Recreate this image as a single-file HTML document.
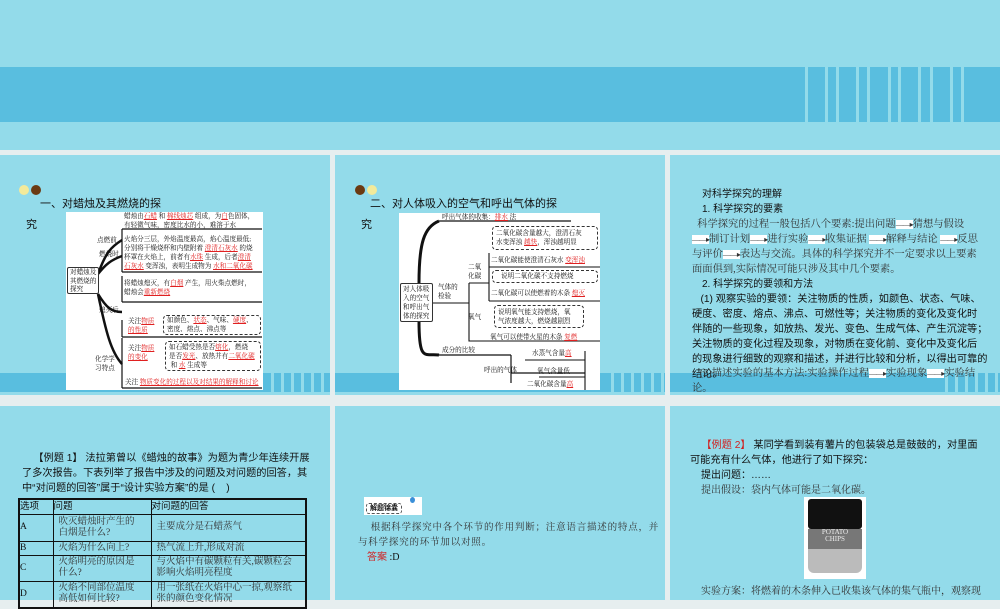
<!DOCTYPE html>
<html><head><meta charset="utf-8"><style>
*{margin:0;padding:0;box-sizing:border-box}
body{width:1000px;height:600px;overflow:hidden;background:#e6eeef;position:relative;font-family:"Liberation Serif","Noto Serif CJK SC",serif;color:#111}
.s{position:absolute;background:#93dbea;overflow:hidden}
.band{position:absolute;left:0;right:0;background:#59bedf}
.strp{position:absolute;top:0;bottom:0;width:3px;background:#93dbea}
.a{position:absolute;white-space:nowrap}
.t{position:absolute;white-space:nowrap;font-size:6.6px;line-height:9px;font-family:"Liberation Serif","Noto Serif CJK SC",serif}
.r{color:#e02020;text-decoration:underline}
.db{position:absolute;border:1px dashed #333;border-radius:4px}
.box{position:absolute;border:1px solid #333;border-radius:2px;background:#fff}
.wb{position:absolute;background:#fff}
.sans{font-family:"Liberation Sans","Noto Sans CJK SC",sans-serif}
.p{font-size:10px;line-height:15px}
.ar{background:#fff;font-size:8px;letter-spacing:-1px}
</style></head><body>

<div class="s" style="left:0;top:0;width:1000px;height:150px">
 <div class="band" style="top:67px;height:55px"></div>
 <div style="position:absolute;left:805px;top:67px;height:55px;width:195px">
  <div class="strp" style="left:0"></div><div class="strp" style="left:20px"></div><div class="strp" style="left:31px"></div><div class="strp" style="left:51px"></div><div class="strp" style="left:62px"></div><div class="strp" style="left:83px"></div><div class="strp" style="left:93px"></div><div class="strp" style="left:113px"></div><div class="strp" style="left:125px"></div><div class="strp" style="left:145px"></div><div class="strp" style="left:156px"></div>
 </div>
</div>

<div class="s" style="left:0;top:155px;width:330px;height:240px">
 <div class="band" style="top:218px;height:19px"></div>
 <div style="position:absolute;left:263px;top:218px;height:19px;width:70px"><div class="strp" style="left:8px"></div><div class="strp" style="left:18px"></div><div class="strp" style="left:28px"></div><div class="strp" style="left:38px"></div><div class="strp" style="left:48px"></div><div class="strp" style="left:58px"></div></div>
</div>
<div class="s" style="left:335px;top:155px;width:330px;height:240px">
 <div class="band" style="top:218px;height:19px"></div>
 <div style="position:absolute;left:268px;top:218px;height:19px;width:70px"><div class="strp" style="left:8px"></div><div class="strp" style="left:18px"></div><div class="strp" style="left:28px"></div><div class="strp" style="left:38px"></div><div class="strp" style="left:48px"></div><div class="strp" style="left:58px"></div></div>
</div>
<div class="s" style="left:670px;top:155px;width:330px;height:240px">
 <div class="band" style="top:218px;height:19px"></div>
 <div style="position:absolute;left:267px;top:218px;height:19px;width:70px"><div class="strp" style="left:8px"></div><div class="strp" style="left:18px"></div><div class="strp" style="left:28px"></div><div class="strp" style="left:38px"></div><div class="strp" style="left:48px"></div><div class="strp" style="left:58px"></div></div>
</div>

<div class="s" style="left:0;top:406px;width:330px;height:194px"></div>
<div class="s" style="left:335px;top:406px;width:330px;height:194px"></div>
<div class="s" style="left:670px;top:406px;width:330px;height:194px"></div>

<!-- slide 1 -->
<div class="a" style="left:19px;top:185px;width:10px;height:10px;border-radius:50%;background:#f3ea9a"></div>
<div class="a" style="left:31px;top:185px;width:10px;height:10px;border-radius:50%;background:#6b3a12"></div>
<div class="a sans" style="left:40px;top:198px;font-size:11px;line-height:13px">一、对蜡烛及其燃烧的探</div>
<div class="a sans" style="left:26px;top:216px;font-size:11px">究</div>
<div class="wb" style="left:66px;top:212px;width:197px;height:178px"></div>
<svg class="a" style="left:66px;top:212px" width="197" height="178" fill="none" stroke="#111">
 <path d="M32 62 C40 40,45 35,56 28 M32 62 C40 52,45 48,56 44" stroke-width="2.5"/>
 <path d="M32 82 C40 95,45 100,56 100 M32 82 C40 120,45 140,56 152" stroke-width="2.5"/>
 <path d="M56 17 V60 M56 64 V90 M56 108 V125 M56 126 V176" stroke-width="1.2"/>
 <path d="M56 17 H196 M56 60 H196 M56 90 H196 M56 125 H196 M56 176 H196" stroke-width="1.2"/>
</svg>
<div class="box t" style="left:67px;top:267px;width:32px;height:27px;padding:1px 2px;line-height:8.5px">对蜡烛及<br>其燃烧的<br>探究</div>
<div class="t" style="left:124px;top:212px">蜡烛由<span class="r">石蜡</span> 和 <span class="r">棉线烛芯</span> 组成，为<span class="r">白</span>色固体，<br>有轻微气味，密度比水的小，难溶于水</div>
<div class="t" style="left:97px;top:236px">点燃前</div>
<div class="t" style="left:99px;top:250px">燃烧时</div>
<div class="t" style="left:124px;top:235px">火焰分三层，外焰温度最高，焰心温度最低;<br>分别将干燥烧杯和内壁附着 <span class="r">澄清石灰水</span> 的烧<br>杯罩在火焰上，前者有<span class="r">水珠</span> 生成，后者<span class="r">澄清</span><br><span class="r">石灰水</span> 变浑浊，表明生成物为 <span class="r">水和二氧化碳</span></div>
<div class="t" style="left:124px;top:279px">将蜡烛熄灭，有<span class="r">白烟</span> 产生，用火柴点燃时，<br>蜡烛会<span class="r">重新燃烧</span></div>
<div class="t" style="left:99px;top:306px">熄灭后</div>
<div class="t" style="left:128px;top:317px">关注<span class="r">物质</span><br><span class="r">的性质</span></div>
<div class="db t" style="left:163px;top:315px;width:98px;height:20px;padding:0 3px">如颜色、<span class="r">状态</span>、气味、<span class="r">硬度</span>、<br>密度、熔点、沸点等</div>
<div class="t" style="left:128px;top:344px">关注<span class="r">物质</span><br><span class="r">的变化</span></div>
<div class="db t" style="left:165px;top:341px;width:96px;height:30px;padding:1px 3px">如石蜡受热是否<span class="r">熔化</span>，燃烧<br>是否<span class="r">发光</span>、放热并有<span class="r">二氧化碳</span><br>&nbsp;和 <span class="r">水</span> 生成等</div>
<div class="t" style="left:95px;top:355px">化学学<br>习特点</div>
<div class="t" style="left:125px;top:378px">关注 <span class="r">物质变化的过程以及对结果的解释和讨论</span></div>

<!-- slide 2 -->
<div class="a" style="left:355px;top:185px;width:10px;height:10px;border-radius:50%;background:#6b3a12"></div>
<div class="a" style="left:367px;top:185px;width:10px;height:10px;border-radius:50%;background:#f3ea9a"></div>
<div class="a sans" style="left:370px;top:198px;font-size:11px;line-height:13px">二、对人体吸入的空气和呼出气体的探</div>
<div class="a sans" style="left:361px;top:216px;font-size:11px">究</div>
<div class="wb" style="left:399px;top:213px;width:201px;height:177px"></div>
<svg class="a" style="left:399px;top:213px" width="201" height="177" fill="none" stroke="#111">
 <path d="M40 8 H172 M40 142 H112 M112 160 H186 M112 142 V170" stroke-width="1.2"/>
 <path d="M20 70 C20 30,25 14,40 8 M20 108 C20 150,26 140,40 142" stroke-width="3"/>
 <path d="M33 90 H70 M70 70 V110 M90 54 H201 M70 70 H90 M90 40 V88 M90 88 H201 M80 128 H201 M70 110 V128 H80 M186 138 V177 M186 147 H126 M186 164 H140" stroke-width="1.1"/>
</svg>
<div class="box t" style="left:400px;top:283px;width:33px;height:39px;padding:1px 2px;line-height:9px">对人体吸<br>入的空气<br>和呼出气<br>体的探究</div>
<div class="t" style="left:442px;top:213px">呼出气体的收集：<span class="r">排水</span> 法</div>
<div class="db t" style="left:492px;top:226px;width:106px;height:24px;padding:2px 3px">二氧化碳含量越大，澄清石灰<br>水变浑浊 <span class="r">越快</span>，浑浊越明显</div>
<div class="t" style="left:491px;top:256px">二氧化碳能使澄清石灰水 <span class="r">变浑浊</span></div>
<div class="t" style="left:468px;top:263px">二氧<br>化碳</div>
<div class="db t" style="left:492px;top:270px;width:106px;height:13px;padding:1px 8px">说明二氧化碳不支持燃烧</div>
<div class="t" style="left:491px;top:289px">二氧化碳可以使燃着的木条 <span class="r">熄灭</span></div>
<div class="t" style="left:438px;top:283px">气体的<br>检验</div>
<div class="t" style="left:468px;top:313px">氧气</div>
<div class="db t" style="left:494px;top:305px;width:90px;height:23px;padding:2px 3px">说明氧气能支持燃烧，氧<br>气浓度越大，燃烧越剧烈</div>
<div class="t" style="left:490px;top:333px">氧气可以使带火星的木条 <span class="r">复燃</span></div>
<div class="t" style="left:442px;top:346px">成分的比较</div>
<div class="t" style="left:532px;top:349px">水蒸气含量<span class="r">高</span></div>
<div class="t" style="left:484px;top:366px">呼出的气体</div>
<div class="t" style="left:537px;top:367px">氧气含量低</div>
<div class="t" style="left:527px;top:380px">二氧化碳含量<span class="r">高</span></div>

<!-- slide 3 -->
<div class="a p sans" style="left:702px;top:187px">对科学探究的理解</div>
<div class="a p sans" style="left:702px;top:202px">1. 科学探究的要素</div>
<div class="a p" style="left:692px;top:217px;color:#333;font-size:10.3px">&nbsp;&nbsp;科学探究的过程一般包括八个要素:提出问题<span class="ar">——▸</span>猜想与假设<br><span class="ar">——▸</span>制订计划<span class="ar">——▸</span>进行实验<span class="ar">——▸</span>收集证据 <span class="ar">——▸</span>解释与结论 <span class="ar">——▸</span>反思<br>与评价<span class="ar">——▸</span>表达与交流。具体的科学探究并不一定要求以上要素<br>面面俱到,实际情况可能只涉及其中几个要素。</div>
<div class="a p sans" style="left:702px;top:277px">2. 科学探究的要领和方法</div>
<div class="a p sans" style="left:692px;top:292px;font-size:10.2px">&nbsp;&nbsp;&nbsp;(1) 观察实验的要领：关注物质的性质，如颜色、状态、气味、<br>硬度、密度、熔点、沸点、可燃性等；关注物质的变化及变化时<br>伴随的一些现象，如放热、发光、变色、生成气体、产生沉淀等；<br>关注物质的变化过程及现象，对物质在变化前、变化中及变化后<br>的现象进行细致的观察和描述，并进行比较和分析，以得出可靠的<br>结论。</div>
<div class="a p" style="left:692px;top:366px;color:#333;font-size:10.3px">&nbsp;&nbsp;&nbsp;(2)描述实验的基本方法:实验操作过程<span class="ar">——▸</span>实验现象<span class="ar">——▸</span>实验结<br>论。</div>

<!-- row3 slide1 -->
<div class="a p sans" style="left:22px;top:451px;font-size:10.2px">&nbsp;&nbsp;&nbsp;&nbsp;【例题 1】 法拉第曾以《蜡烛的故事》为题为青少年连续开展<br>了多次报告。下表列举了报告中涉及的问题及对问题的回答，其<br>中“对问题的回答”属于“设计实验方案”的是 (&nbsp;&nbsp;&nbsp;&nbsp;)</div>
<table class="a" style="left:18px;top:498px;width:289px;border-collapse:collapse;font-size:9.5px;line-height:11px;border:2px solid #111">
<colgroup><col style="width:34px"><col style="width:98px"><col></colgroup>
<tr style="height:15px"><td style="border:1px solid #111" class="sans">选项</td><td style="border:1px solid #111" class="sans">问题</td><td style="border:1px solid #111" class="sans">对问题的回答</td></tr>
<tr style="height:27px"><td style="border:1px solid #111">A</td><td style="border:1px solid #111;padding-left:5px;color:#333">吹灭蜡烛时产生的<br>白烟是什么?</td><td style="border:1px solid #111;padding-left:5px;color:#333">主要成分是石蜡蒸气</td></tr>
<tr style="height:14px"><td style="border:1px solid #111">B</td><td style="border:1px solid #111;padding-left:5px;color:#333">火焰为什么向上?</td><td style="border:1px solid #111;padding-left:5px;color:#333">热气流上升,形成对流</td></tr>
<tr style="height:26px"><td style="border:1px solid #111">C</td><td style="border:1px solid #111;padding-left:5px;color:#333">火焰明亮的原因是<br>什么?</td><td style="border:1px solid #111;padding-left:5px;color:#333">与火焰中有碳颗粒有关,碳颗粒会<br>影响火焰明亮程度</td></tr>
<tr style="height:27px"><td style="border:1px solid #111">D</td><td style="border:1px solid #111;padding-left:5px;color:#333">火焰不同部位温度<br>高低如何比较?</td><td style="border:1px solid #111;padding-left:5px;color:#333">用一张纸在火焰中心一掠,观察纸<br>张的颜色变化情况</td></tr>
</table>

<!-- row3 slide2 -->
<div class="a" style="left:364px;top:497px;width:58px;height:18px;background:#fff"></div>
<div class="a sans" style="left:366px;top:503px;border:1px dashed #555;border-radius:3px;font-size:7px;font-weight:bold;padding:0 3px;line-height:9px;background:#fff">解题锦囊</div>
<div class="a" style="left:410px;top:497px;width:5px;height:6px;border-radius:50%;background:#3a8fd8"></div>
<div class="a p" style="left:358px;top:521px;color:#333;font-size:9.5px;letter-spacing:0.8px">&nbsp;&nbsp;&nbsp;&nbsp;根据科学探究中各个环节的作用判断；注意语言描述的特点，并<br>与科学探究的环节加以对照。</div>
<div class="a p" style="left:367px;top:550px"><span style="color:#d02020" class="sans">答案</span> :D</div>

<!-- row3 slide3 -->
<div class="a p sans" style="left:690px;top:438px;font-size:10.2px">&nbsp;&nbsp;&nbsp;&nbsp;<span style="color:#d02020">【例题 2】</span> 某同学看到装有薯片的包装袋总是鼓鼓的，对里面<br>可能充有什么气体，他进行了如下探究：</div>
<div class="a p sans" style="left:701px;top:468px">提出问题：……</div>
<div class="a p" style="left:701px;top:483px;color:#333">提出假设：袋内气体可能是二氧化碳。</div>
<div class="a" style="left:804px;top:497px;width:62px;height:82px;background:#fff">
 <div style="position:absolute;left:4px;top:2px;width:54px;height:30px;background:#111;border-radius:3px"></div>
 <div style="position:absolute;left:4px;top:32px;width:54px;height:20px;background:#777;font-size:7px;color:#eee;text-align:center;line-height:7px;font-family:'Liberation Serif',serif">POTATO<br>CHIPS</div>
 <div style="position:absolute;left:4px;top:52px;width:54px;height:24px;background:#bbb;border-radius:0 0 6px 6px"></div>
</div>
<div class="a p" style="left:701px;top:584px;color:#333">实验方案：将燃着的木条伸入已收集该气体的集气瓶中，观察现</div>
</body></html>
